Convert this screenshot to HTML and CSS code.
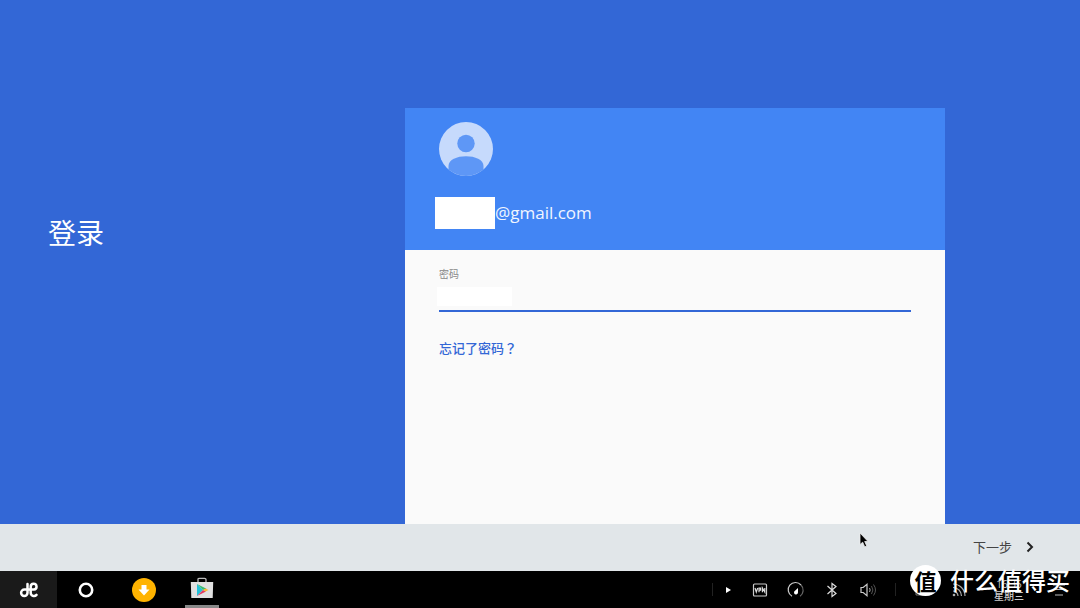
FILE: index.html
```html
<!DOCTYPE html>
<html lang="zh-CN">
<head>
<meta charset="utf-8">
<meta name="viewport" content="width=device-width, initial-scale=1">
<title>登录</title>
<link rel="stylesheet" href="styles.css">
</head>
<body>
<main class="stage">
  <h1 class="title">登录</h1>
  <form class="card" id="login">
    <header class="account">
      <svg class="avatar" viewBox="0 0 54 54" aria-hidden="true">
        <circle cx="27" cy="27" r="27" fill="#c6dafc"/>
        <circle cx="27" cy="21.500" r="8.700" fill="#5e97f6"/>
        <path d="M9.500 47.500V44C9.500 37.500 18 34.200 27 34.200S44.500 37.500 44.500 44v3.500A27 27 0 0 1 9.500 47.500z" fill="#5e97f6"/>
      </svg>
      <p class="email"><span class="mask"></span>@gmail.com</p>
    </header>
    <div class="fields">
      <label class="label" for="password">密码</label>
      <div class="field"><input class="input" id="password" type="password"></div>
      <a class="forgot" href="#forgot">忘记了密码<span class="mark" lang="zh-TW">？</span></a>
    </div>
  </form>
</main>
<div class="actions">
  <button class="next" type="submit" form="login">下一步
    <svg class="chevron" viewBox="0 0 8 12" aria-hidden="true"><path d="M1.500 1.500L6 6l-4.500 4.500" fill="none" stroke="#222" stroke-width="2"/></svg>
  </button>
</div>
<footer class="taskbar">
  <nav class="apps">
    <button class="app start" type="button" aria-label="开始">
      <svg class="start-icon" viewBox="0 0 20 16" aria-hidden="true"><g fill="none" stroke="#fff" stroke-width="2.500" stroke-linecap="round" stroke-linejoin="round"><path d="M8.500 2v8.800a3.200 3.200 0 1 1-3.200-3.200H15a2.900 2.900 0 1 0-3.300-2.800v5.800a3.300 3.300 0 0 0 5.800 2.300"/></g></svg>
    </button>
    <button class="app" type="button" aria-label="主页">
      <svg class="home-icon" viewBox="0 0 16 16" aria-hidden="true"><circle cx="8" cy="8" r="6.200" fill="none" stroke="#fff" stroke-width="2.600"/></svg>
    </button>
    <button class="app" type="button" aria-label="下载">
      <svg class="app-icon" viewBox="0 0 24 24" aria-hidden="true"><circle cx="12" cy="12" r="12" fill="#ffb300"/><path d="M9.500 7h5v4.500H17.500L12 17.500 6.500 11.500h3z" fill="#fff"/></svg>
    </button>
    <button class="app running" type="button" aria-label="应用商店">
      <svg class="app-icon raised" viewBox="0 0 24 24" aria-hidden="true">
        <path d="M8 5V2.500Q8 1.300 9.500 1.300h5q1.500 0 1.500 1.200V5" fill="none" stroke="#bbb" stroke-width="1.300"/>
        <path d="M.8 5h22.400l-.5 16H1.300z" fill="#e1e1e1"/>
        <path d="M7 7v12l6-6z" fill="#24c1d8"/>
        <path d="M7 7l9.500 4.700L13 13z" fill="#3bbd70"/>
        <path d="M7 19l6-6 3 1.500z" fill="#e33d64"/>
        <path d="M13 13l2.500-1.600 3 1.600-3 1.600z" fill="#ffb62e"/>
      </svg>
    </button>
  </nav>
  <div class="tray">
    <span class="divider first"></span>
    <button class="status" type="button" aria-label="展开"><svg class="icon small" viewBox="0 0 10 18"><path d="M3 6l5 3-5 3z" fill="#fff"/></svg></button>
    <button class="status" type="button" aria-label="VPN"><svg class="icon" viewBox="0 0 18 18"><rect x="2.500" y="3" width="13" height="12" rx="1" fill="none" stroke="#ccc" stroke-width="1.200"/><path d="M4 7l1.300 4L6.700 7M8 11.200V7.200h1.600v2H8M11.400 11.200V7l2.400 4V7" fill="none" stroke="#ddd" stroke-width="1.200"/></svg></button>
    <button class="status" type="button" aria-label="性能"><svg class="icon" viewBox="0 0 18 18"><path d="M5 15.200A7.300 7.300 0 1 1 14 4" fill="none" stroke="#ccc" stroke-width="1.200"/><path d="M14 4a7.300 7.300 0 0 1-1 11.200" fill="none" stroke="#666" stroke-width="1.200"/><path d="M11 7v4.500a2 2 0 1 1-3-1.700z" fill="#fff"/></svg></button>
    <button class="status" type="button" aria-label="蓝牙"><svg class="icon" viewBox="0 0 18 18"><path d="M4.500 5l8.500 7.500L9 15.500v-13L13 5.500 4.500 13" fill="none" stroke="#ddd" stroke-width="1.200"/></svg></button>
    <button class="status" type="button" aria-label="音量"><svg class="icon" viewBox="0 0 18 18"><path d="M2 6.500h2.200L8 3.300v11.400L4.200 11.500H2z" fill="none" stroke="#ccc" stroke-width="1.200"/><path d="M10.500 7q1.300 2 0 4" fill="none" stroke="#aaa"/><path d="M12.500 5q2.800 4 0 8M14.500 3.500q4 5.500 0 11" fill="none" stroke="#555"/></svg></button>
    <span class="divider"></span>
    <button class="status" type="button" aria-label="键盘"><svg class="icon" viewBox="0 0 18 18"><path d="M2 5h14v9H2z" fill="none" stroke="#777"/></svg></button>
    <button class="status" type="button" aria-label="网络"><svg class="icon" viewBox="0 0 18 18"><g fill="none" stroke="#aaa" stroke-width="1.200"><path d="M3 3a12 12 0 0 1 12 12M3 6.500a8.500 8.500 0 0 1 8.500 8.500M3 10a5 5 0 0 1 5 5"/></g><circle cx="4" cy="14" r="1.300" fill="#aaa"/></svg></button>
    <time class="clock"><span>16:35</span><span>星期三</span></time>
    <button class="status" type="button" aria-label="通知"><svg class="icon" viewBox="0 0 18 18"><path d="M3 4h12M3 8.500h12M5 14h8" stroke="#bbb" stroke-width="1.200"/></svg></button>
  </div>
</footer>
<div class="watermark"><span class="seal">值</span><span>什么值得买</span></div>
<svg class="pointer" viewBox="0 0 10 16" aria-hidden="true"><path d="M1 1v11.500l2.700-2.300 2 4.600 2-.9-2-4.400H9z" fill="#000" stroke="#eee" stroke-width=".8"/></svg>
</body>
</html>
```
FILE: styles.css
```css
* { box-sizing: border-box; }
body {
  margin: 0;
  min-height: 100vh;
  display: flex;
  flex-direction: column;
  position: relative;
  overflow: hidden;
  background: #3367d6;
  font-family: "Open Sans", "Noto Sans CJK SC", sans-serif;
}
button {
  border: 0;
  padding: 0;
  background: none;
  color: inherit;
  font: inherit;
}
svg { display: block; }
.stage {
  flex: 1;
  display: grid;
  grid-template-columns: 3fr 4fr 1fr;
  padding-top: 108px;
}
.title {
  margin: 105px 0 0 48px;
  color: #fff;
  font-size: 28px;
  font-weight: 400;
  line-height: 40px;
}
.card {
  display: flex;
  flex-direction: column;
  background: #fafafa;
}
.account {
  padding: 14px 34px 21px;
  background: #4285f4;
}
.avatar { width: 54px; height: 54px; }
.email {
  display: flex;
  align-items: center;
  margin: 21px 0 0 -4px;
  color: #f0f5ff;
  font-size: 17px;
  line-height: 32px;
}
.mask {
  width: 60px;
  height: 32px;
  background: #fff;
}
.fields {
  display: flex;
  flex-direction: column;
  align-items: flex-start;
  padding: 16px 34px;
}
.label {
  color: #888;
  font-size: 10px;
  line-height: 16px;
}
.field {
  width: 100%;
  padding: 5px 0 4px;
  border-bottom: 2px solid #3367d6;
}
.input {
  display: block;
  width: 75px;
  height: 19px;
  margin-left: -2px;
  border: 0;
  padding: 0;
  background: #fff;
  outline: 0;
}
.forgot {
  margin-top: 26px;
  color: #3367d6;
  font-size: 13px;
  font-weight: 500;
  line-height: 20px;
  text-decoration: none;
}
.mark { font-family: "Noto Sans CJK TC", sans-serif; }
.actions {
  display: flex;
  justify-content: flex-end;
  height: 47px;
  padding: 0 46px 2px 0;
  background: #e1e6e9;
}
.next {
  display: flex;
  align-items: center;
  gap: 14px;
  color: #444;
  font-size: 13px;
}
.chevron { width: 8px; height: 12px; }
.taskbar {
  display: flex;
  justify-content: space-between;
  height: 37px;
  background: #000;
}
.apps, .tray { display: flex; align-items: center; }
.app {
  display: flex;
  align-items: center;
  justify-content: center;
  align-self: stretch;
  width: 58px;
  color: #fff;
}
.app.start {
  width: 57px;
  background: #1a1a1a;
}
.start-icon { width: 20px; height: 16px; }
.home-icon { width: 16px; height: 16px; }
.app-icon { width: 24px; height: 24px; }
.raised { margin-bottom: 2px; }
.running {
  background: linear-gradient(#888, #888) center bottom / 34px 3px no-repeat;
}
.tray { gap: 18px; padding-right: 12px; }
.divider {
  width: 1px;
  height: 13px;
  background: #222;
}
.divider.first { margin-right: -8px; }
.icon { width: 18px; height: 18px; }
.icon.small { width: 10px; }
.clock {
  display: flex;
  flex-direction: column;
  align-self: flex-end;
  width: 46px;
  padding-bottom: 6px;
  color: #ccc;
  font-size: 10px;
  font-weight: 500;
  line-height: 12px;
  text-align: center;
}
.watermark {
  position: absolute;
  right: 10px;
  bottom: 12px;
  display: flex;
  align-items: center;
  gap: 9px;
  color: #fff;
  font-family: "Noto Sans CJK SC", sans-serif;
  font-size: 24px;
  font-weight: 500;
  line-height: 32px;
}
.seal {
  width: 31px;
  height: 31px;
  border-radius: 50%;
  background: #fff;
  color: #000;
  font-size: 22px;
  font-weight: 700;
  line-height: 30px;
  text-align: center;
}
.pointer {
  position: absolute;
  right: 211px;
  bottom: 60px;
  width: 10px;
  height: 16px;
}
```
